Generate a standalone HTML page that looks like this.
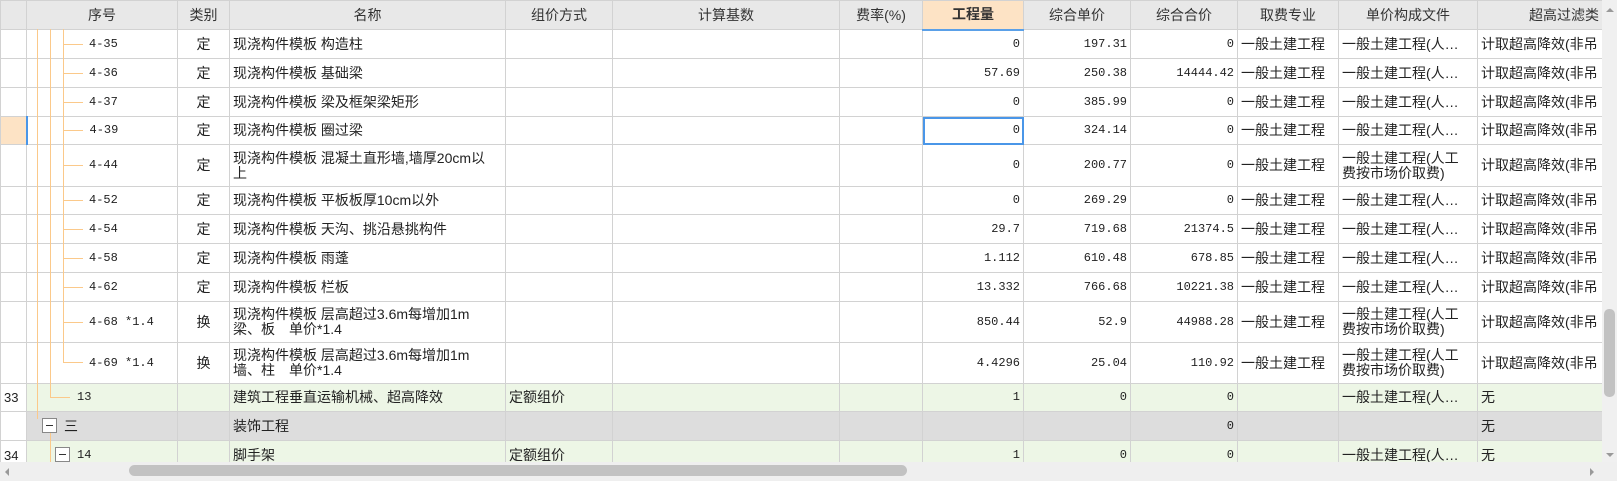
<!DOCTYPE html>
<html><head><meta charset="utf-8"><style>
*{margin:0;padding:0;box-sizing:border-box}
body{width:1617px;height:481px;overflow:hidden;background:#fff;font-family:"Liberation Sans","Noto Sans CJK SC",sans-serif;font-size:14px;color:#222;position:relative}
#wrap{position:absolute;left:0;top:0;width:1602px;height:462px;overflow:hidden}
table{border-collapse:collapse;table-layout:fixed;width:1602px}
td,th{border:1px solid #d2d2d2;padding:0 3px;white-space:nowrap;overflow:hidden;font-weight:normal;line-height:15px}
th{background:#e8e8e8;height:29px;text-align:center;font-size:14px;color:#333}
th.hl{background:#fde3c5;font-weight:bold;border-bottom:2px solid #5aa0e8}
.n{text-align:right;font-family:"Liberation Mono",monospace;font-size:12px}
.c{text-align:center}
.rn{font-size:13px;padding-left:3px}
tr.g td{background:#edf6e6}
tr.gr td{background:#dddddd}
.mono{font-family:"Liberation Mono","Noto Sans CJK SC",monospace;font-size:12px}
.id{padding-left:62px}
.ov{position:absolute;background:#fbc98a}
.box{position:absolute;width:15px;height:15px;border:1px solid #888;background:#fff;z-index:3}
.box:after{content:"";position:absolute;left:3px;right:3px;top:6px;height:1px;background:#333}
</style></head><body>
<div id="wrap">
<table>
<colgroup><col style="width:26px"><col style="width:151px"><col style="width:52px"><col style="width:276px"><col style="width:107px"><col style="width:227px"><col style="width:83px"><col style="width:101px"><col style="width:107px"><col style="width:107px"><col style="width:101px"><col style="width:139px"><col style="width:125px"></colgroup>
<tr><th></th><th>序号</th><th>类别</th><th>名称</th><th>组价方式</th><th>计算基数</th><th>费率(%)</th><th class="hl">工程量</th><th>综合单价</th><th>综合合价</th><th>取费专业</th><th>单价构成文件</th><th style="text-align:right">超高过滤类</th></tr>
<tr style="height:29px"><td></td><td class="mono id">4-35</td><td class="c">定</td><td>现浇构件模板 构造柱</td><td></td><td></td><td></td><td class="n">0</td><td class="n">197.31</td><td class="n">0</td><td>一般土建工程</td><td>一般土建工程(人…</td><td>计取超高降效(非吊</td></tr>
<tr style="height:29px"><td></td><td class="mono id">4-36</td><td class="c">定</td><td>现浇构件模板 基础梁</td><td></td><td></td><td></td><td class="n">57.69</td><td class="n">250.38</td><td class="n">14444.42</td><td>一般土建工程</td><td>一般土建工程(人…</td><td>计取超高降效(非吊</td></tr>
<tr style="height:29px"><td></td><td class="mono id">4-37</td><td class="c">定</td><td>现浇构件模板 梁及框架梁矩形</td><td></td><td></td><td></td><td class="n">0</td><td class="n">385.99</td><td class="n">0</td><td>一般土建工程</td><td>一般土建工程(人…</td><td>计取超高降效(非吊</td></tr>
<tr style="height:28px"><td style="background:#fde3c5;border-right:2px solid #4a96e8"></td><td class="mono id">4-39</td><td class="c">定</td><td>现浇构件模板 圈过梁</td><td></td><td></td><td></td><td class="n" style="outline:2px solid #4a96e8;outline-offset:-2px">0</td><td class="n">324.14</td><td class="n">0</td><td>一般土建工程</td><td>一般土建工程(人…</td><td>计取超高降效(非吊</td></tr>
<tr style="height:42px"><td></td><td class="mono id">4-44</td><td class="c">定</td><td>现浇构件模板 混凝土直形墙,墙厚20cm以<br>上</td><td></td><td></td><td></td><td class="n">0</td><td class="n">200.77</td><td class="n">0</td><td>一般土建工程</td><td>一般土建工程(人工<br>费按市场价取费)</td><td>计取超高降效(非吊</td></tr>
<tr style="height:28px"><td></td><td class="mono id">4-52</td><td class="c">定</td><td>现浇构件模板 平板板厚10cm以外</td><td></td><td></td><td></td><td class="n">0</td><td class="n">269.29</td><td class="n">0</td><td>一般土建工程</td><td>一般土建工程(人…</td><td>计取超高降效(非吊</td></tr>
<tr style="height:29px"><td></td><td class="mono id">4-54</td><td class="c">定</td><td>现浇构件模板 天沟、挑沿悬挑构件</td><td></td><td></td><td></td><td class="n">29.7</td><td class="n">719.68</td><td class="n">21374.5</td><td>一般土建工程</td><td>一般土建工程(人…</td><td>计取超高降效(非吊</td></tr>
<tr style="height:29px"><td></td><td class="mono id">4-58</td><td class="c">定</td><td>现浇构件模板 雨蓬</td><td></td><td></td><td></td><td class="n">1.112</td><td class="n">610.48</td><td class="n">678.85</td><td>一般土建工程</td><td>一般土建工程(人…</td><td>计取超高降效(非吊</td></tr>
<tr style="height:29px"><td></td><td class="mono id">4-62</td><td class="c">定</td><td>现浇构件模板 栏板</td><td></td><td></td><td></td><td class="n">13.332</td><td class="n">766.68</td><td class="n">10221.38</td><td>一般土建工程</td><td>一般土建工程(人…</td><td>计取超高降效(非吊</td></tr>
<tr style="height:41px"><td></td><td class="mono id">4-68 *1.4</td><td class="c">换</td><td>现浇构件模板 层高超过3.6m每增加1m<br>梁、板　单价*1.4</td><td></td><td></td><td></td><td class="n">850.44</td><td class="n">52.9</td><td class="n">44988.28</td><td>一般土建工程</td><td>一般土建工程(人工<br>费按市场价取费)</td><td>计取超高降效(非吊</td></tr>
<tr style="height:41px"><td></td><td class="mono id">4-69 *1.4</td><td class="c">换</td><td>现浇构件模板 层高超过3.6m每增加1m<br>墙、柱　单价*1.4</td><td></td><td></td><td></td><td class="n">4.4296</td><td class="n">25.04</td><td class="n">110.92</td><td>一般土建工程</td><td>一般土建工程(人工<br>费按市场价取费)</td><td>计取超高降效(非吊</td></tr>
<tr class="g" style="height:28px"><td class="rn" style="background:#fff">33</td><td class="mono" style="padding-left:50px">13</td><td></td><td>建筑工程垂直运输机械、超高降效</td><td>定额组价</td><td></td><td></td><td class="n">1</td><td class="n">0</td><td class="n">0</td><td></td><td>一般土建工程(人…</td><td>无</td></tr>
<tr class="gr" style="height:29px"><td style="background:#fff"></td><td style="padding-left:37px">三</td><td></td><td>装饰工程</td><td></td><td></td><td></td><td></td><td></td><td class="n">0</td><td></td><td></td><td>无</td></tr>
<tr class="g" style="height:29px"><td class="rn" style="background:#fff">34</td><td class="mono" style="padding-left:50px">14</td><td></td><td>脚手架</td><td>定额组价</td><td></td><td></td><td class="n">1</td><td class="n">0</td><td class="n">0</td><td></td><td>一般土建工程(人…</td><td>无</td></tr>
</table>
<div class="ov" style="left:37px;top:29px;width:1px;height:390px"></div>
<div class="ov" style="left:50px;top:29px;width:1px;height:368px"></div>
<div class="ov" style="left:50px;top:397px;width:20px;height:1px"></div>
<div class="ov" style="left:50px;top:433px;width:1px;height:29px"></div>
<div class="ov" style="left:63px;top:29px;width:1px;height:333px"></div>
<div class="ov" style="left:63px;top:44px;width:20px;height:1px"></div>
<div class="ov" style="left:63px;top:73px;width:20px;height:1px"></div>
<div class="ov" style="left:63px;top:102px;width:20px;height:1px"></div>
<div class="ov" style="left:63px;top:130px;width:20px;height:1px"></div>
<div class="ov" style="left:63px;top:165px;width:20px;height:1px"></div>
<div class="ov" style="left:63px;top:200px;width:20px;height:1px"></div>
<div class="ov" style="left:63px;top:229px;width:20px;height:1px"></div>
<div class="ov" style="left:63px;top:258px;width:20px;height:1px"></div>
<div class="ov" style="left:63px;top:287px;width:20px;height:1px"></div>
<div class="ov" style="left:63px;top:322px;width:20px;height:1px"></div>
<div class="ov" style="left:63px;top:362px;width:20px;height:1px"></div>
<div class="box" style="left:42px;top:418px"></div>
<div class="box" style="left:55px;top:447px"></div>
</div>
<div style="position:absolute;left:1602px;top:0;width:15px;height:462px;background:#f0f0f0"></div>
<div style="position:absolute;left:1606px;top:8px;width:0;height:0;border-left:4px solid transparent;border-right:4px solid transparent;border-bottom:4px solid #999"></div>
<div style="position:absolute;left:1604px;top:309px;width:11px;height:88px;background:#c2c2c2;border-radius:5px"></div>
<div style="position:absolute;left:1606px;top:453px;width:0;height:0;border-left:4px solid transparent;border-right:4px solid transparent;border-top:4px solid #999"></div>
<div style="position:absolute;left:0;top:462px;width:1617px;height:19px;background:#efefef"></div>
<div style="position:absolute;left:5px;top:468px;width:0;height:0;border-top:4px solid transparent;border-bottom:4px solid transparent;border-right:4px solid #999"></div>
<div style="position:absolute;left:129px;top:465px;width:778px;height:11px;background:#c2c2c2;border-radius:6px"></div>
<div style="position:absolute;left:1590px;top:468px;width:0;height:0;border-top:4px solid transparent;border-bottom:4px solid transparent;border-left:4px solid #999"></div>
</body></html>
